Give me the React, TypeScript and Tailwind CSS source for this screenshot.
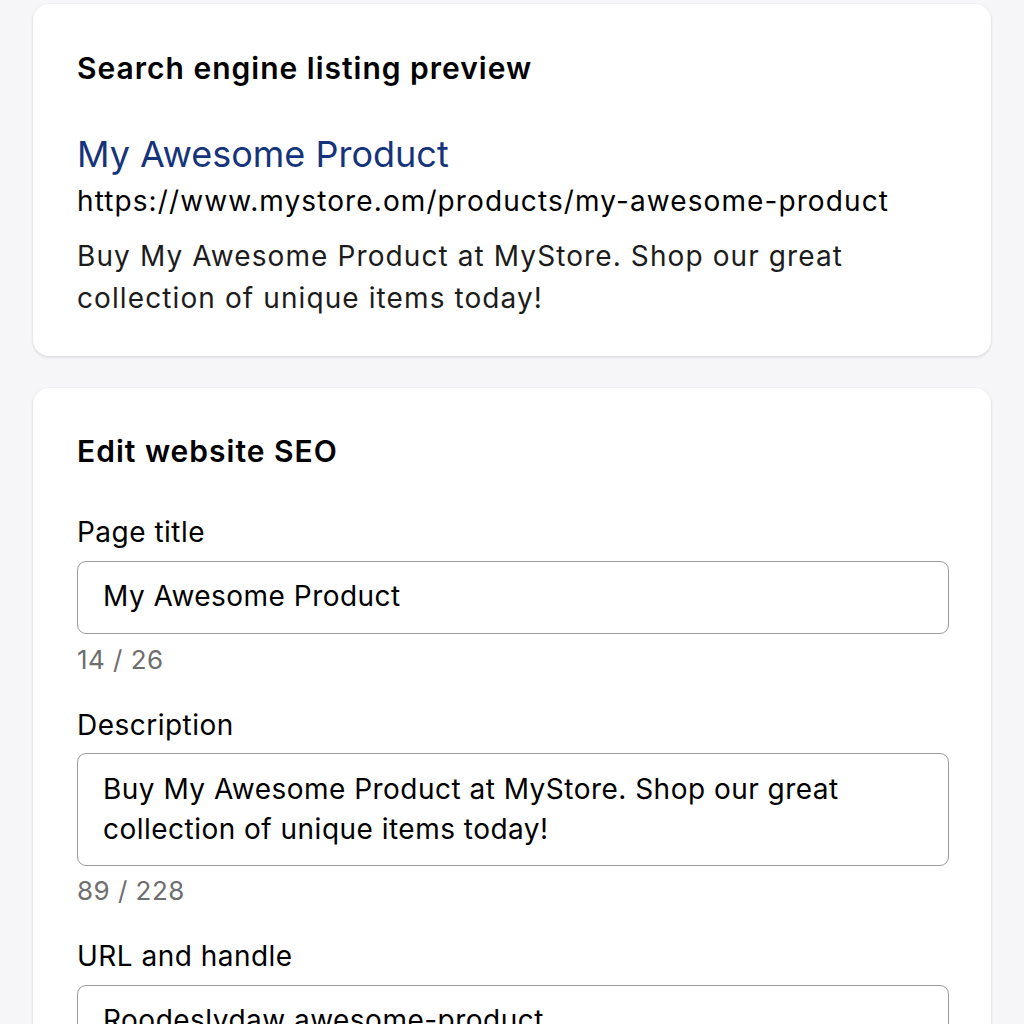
export default function App() {
  return (
    <div className="min-h-screen bg-[#f6f6f8] px-[33px] pt-[4px] text-black tracking-[0.03em]" style={{ fontFamily: 'Inter, "Noto Sans", sans-serif' }}>
      <div className="flex flex-col gap-[32px] w-[958px]">
        <section className="rounded-[16px] bg-white pl-[44px] pr-[42px] pt-[45px] pb-[37px] shadow-[0_1px_3px_rgba(0,0,0,0.15)]">
          <h2 className="text-[30px] leading-[38px] font-semibold tracking-[1px]">Search engine listing preview</h2>
          <div className="mt-[45px] text-[36px] leading-[44px] tracking-normal text-[#15347c]">My Awesome Product</div>
          <div className="mt-[5px] text-[28px] leading-[40px] tracking-[1.1px]">https://www.mystore.om/products/my-awesome-product</div>
          <p className="mt-[14px] text-[28px] leading-[42px] tracking-[1.1px] text-[#1c1c1c]">
            Buy My Awesome Product at MyStore. Shop our great collection of unique items today!
          </p>
        </section>

        <section className="rounded-t-[16px] bg-white pl-[44px] pr-[42px] pt-[44px] pb-[40px] shadow-[0_1px_3px_rgba(0,0,0,0.15)]">
          <h2 className="text-[30px] leading-[38px] font-semibold tracking-[1px]">Edit website SEO</h2>

          <label className="mt-[44px] block text-[28px] leading-[36px]">Page title</label>
          <div className="mt-[11px] flex h-[73px] items-center rounded-[9px] border-[1.5px] border-[#9b9b9b] px-[25px] pb-[4px] text-[28px]">
            My Awesome Product
          </div>
          <div className="mt-[8px] text-[26px] leading-[36px] text-[#6e6e6e]">14 / 26</div>

          <label className="mt-[29px] block text-[28px] leading-[36px]">Description</label>
          <div className="mt-[10px] rounded-[9px] border-[1.5px] border-[#9b9b9b] px-[25px] pt-[15px] pb-[16px] text-[28px] leading-[40px]">
            Buy My Awesome Product at MyStore. Shop our great collection of unique items today!
          </div>
          <div className="mt-[7px] text-[26px] leading-[36px] text-[#6e6e6e]">89 / 228</div>

          <label className="mt-[29px] block text-[28px] leading-[36px]">URL and handle</label>
          <div className="mt-[11px] flex h-[73px] items-center rounded-[9px] border-[1.5px] border-[#9b9b9b] px-[25px] pb-[4px] text-[28px]">
            Roodeslydaw awesome-product
          </div>
        </section>
      </div>
    </div>
  )
}
